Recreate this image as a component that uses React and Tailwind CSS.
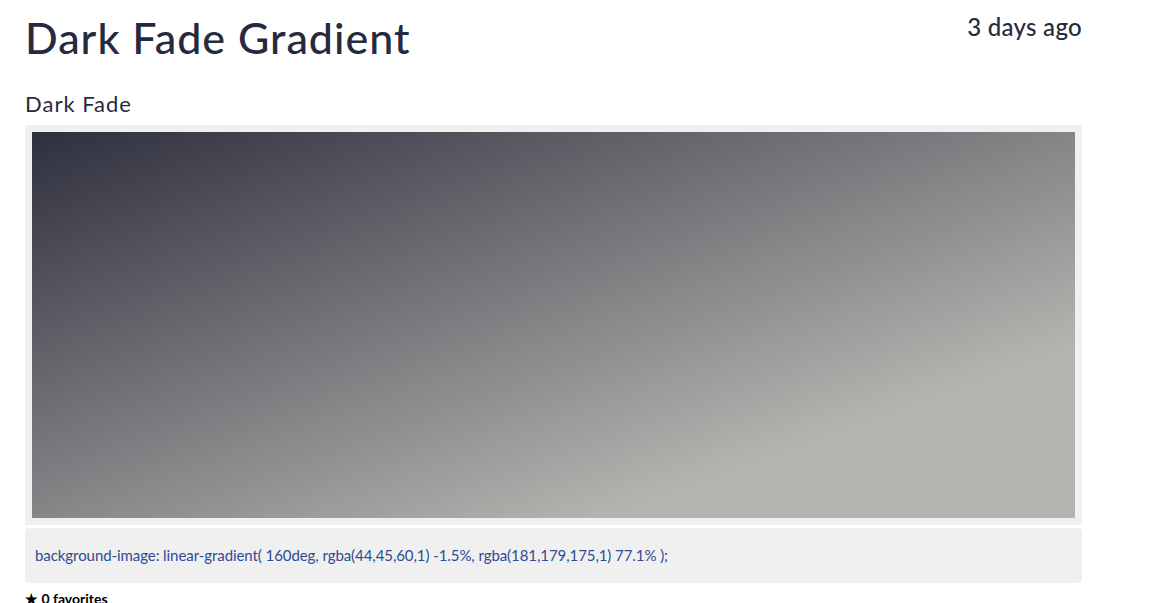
import React from 'react';

const gradient = 'linear-gradient( 160deg, rgba(44,45,60,1) -1.5%, rgba(181,179,175,1) 77.1% )';

const App = () => {
  return (
    <div className="min-h-screen bg-white font-['Lato','Open_Sans',sans-serif] text-[#262a3e]">
      <div className="w-[1057px] ml-[25px]">
        {/* HEADER */}
        <div className="flex justify-between items-start">
          <h1 className="text-[43px] leading-none font-medium tracking-[1px] pt-[16px]">Dark Fade Gradient</h1>
          <span className="text-[24px] leading-none font-medium tracking-[0.3px] pt-[15px]">3 days ago</span>
        </div>

        <h2 className="text-[22px] leading-none tracking-[1px] mt-[34px]">Dark Fade</h2>

        {/* PREVIEW */}
        <div className="mt-[10px] bg-[#f0f0f0] p-[7px]">
          <div className="h-[386px]" style={{ backgroundImage: gradient }}></div>
        </div>

        {/* CODE */}
        <div className="mt-[3px] bg-[#f0f0f0] rounded-[4px] h-[55px] flex items-center px-[10px]">
          <code className="font-['Lato','Open_Sans',sans-serif] text-[15px] text-[#2f4b94] tracking-[-0.07px]">
            background-image: linear-gradient( 160deg, rgba(44,45,60,1) -1.5%, rgba(181,179,175,1) 77.1% );
          </code>
        </div>

        <div className="mt-[9px] text-[14px] font-bold text-black leading-none">
          ★ 0 favorites
        </div>
      </div>
    </div>
  );
};

export default App;
